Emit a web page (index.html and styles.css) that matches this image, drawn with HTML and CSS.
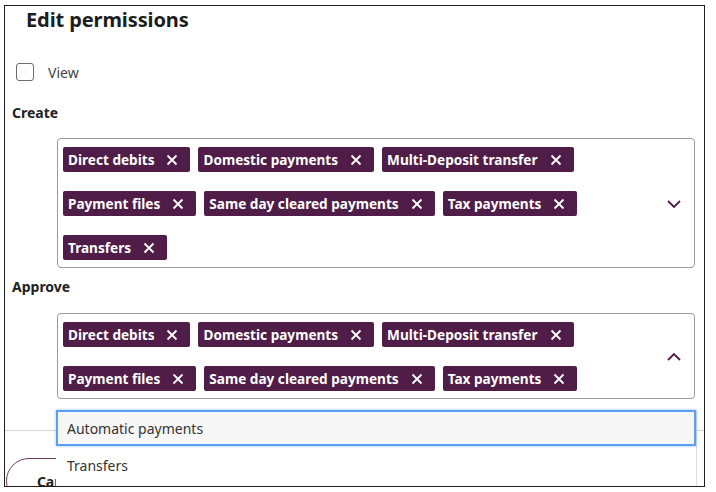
FILE: index.html
```html
<!DOCTYPE html>
<html lang="en">
<head>
<meta charset="utf-8">
<title>Edit permissions</title>
<link rel="stylesheet" href="styles.css">
</head>
<body>
<div class="modal">
  <h1 class="title">Edit permissions</h1>
  <label class="check"><span class="check-box"></span><span class="check-text">View</span></label>

  <div class="field-label">Create</div>
  <div class="select">
    <div class="chips">
      <span class="chip">Direct debits<svg class="chip-x" viewBox="0 0 12 12"><path d="M1.5 1.5L10.5 10.5M10.5 1.5L1.5 10.5"/></svg></span>
      <span class="chip">Domestic payments<svg class="chip-x" viewBox="0 0 12 12"><path d="M1.5 1.5L10.5 10.5M10.5 1.5L1.5 10.5"/></svg></span>
      <span class="chip">Multi-Deposit transfer<svg class="chip-x" viewBox="0 0 12 12"><path d="M1.5 1.5L10.5 10.5M10.5 1.5L1.5 10.5"/></svg></span>
      <span class="chip">Payment files<svg class="chip-x" viewBox="0 0 12 12"><path d="M1.5 1.5L10.5 10.5M10.5 1.5L1.5 10.5"/></svg></span>
      <span class="chip">Same day cleared payments<svg class="chip-x" viewBox="0 0 12 12"><path d="M1.5 1.5L10.5 10.5M10.5 1.5L1.5 10.5"/></svg></span>
      <span class="chip">Tax payments<svg class="chip-x" viewBox="0 0 12 12"><path d="M1.5 1.5L10.5 10.5M10.5 1.5L1.5 10.5"/></svg></span>
      <span class="chip">Transfers<svg class="chip-x" viewBox="0 0 12 12"><path d="M1.5 1.5L10.5 10.5M10.5 1.5L1.5 10.5"/></svg></span>
    </div>
    <svg class="chevron" viewBox="0 0 14 8"><path d="M1 1L7 7L13 1"/></svg>
  </div>

  <div class="field-label approve">Approve</div>
  <div class="select select-open">
    <div class="chips">
      <span class="chip">Direct debits<svg class="chip-x" viewBox="0 0 12 12"><path d="M1.5 1.5L10.5 10.5M10.5 1.5L1.5 10.5"/></svg></span>
      <span class="chip">Domestic payments<svg class="chip-x" viewBox="0 0 12 12"><path d="M1.5 1.5L10.5 10.5M10.5 1.5L1.5 10.5"/></svg></span>
      <span class="chip">Multi-Deposit transfer<svg class="chip-x" viewBox="0 0 12 12"><path d="M1.5 1.5L10.5 10.5M10.5 1.5L1.5 10.5"/></svg></span>
      <span class="chip">Payment files<svg class="chip-x" viewBox="0 0 12 12"><path d="M1.5 1.5L10.5 10.5M10.5 1.5L1.5 10.5"/></svg></span>
      <span class="chip">Same day cleared payments<svg class="chip-x" viewBox="0 0 12 12"><path d="M1.5 1.5L10.5 10.5M10.5 1.5L1.5 10.5"/></svg></span>
      <span class="chip">Tax payments<svg class="chip-x" viewBox="0 0 12 12"><path d="M1.5 1.5L10.5 10.5M10.5 1.5L1.5 10.5"/></svg></span>
    </div>
    <svg class="chevron" viewBox="0 0 14 8"><path d="M1 7L7 1L13 7"/></svg>
    <ul class="menu">
      <li class="menu-item active">Automatic payments</li>
      <li class="menu-item">Transfers</li>
    </ul>
  </div>

  <div class="footer">
    <button class="btn-cancel">Cancel</button>
  </div>
</div>
</body>
</html>
```

FILE: styles.css
```css
html, body {
  margin: 0;
  padding: 0;
  background: #ffffff;
}

body {
  font-family: "Noto Sans", "Open Sans", sans-serif;
  color: #222222;
}

.modal {
  margin: 5px 0 0 4px;
  width: 692px;
  height: 480px;
  border: 1px solid #1e1e1e;
  overflow: hidden;
  padding: 0 0 0 7px;
  box-sizing: content-box;
  display: flex;
  flex-direction: column;
  align-items: flex-start;
}

.title {
  margin: 2px 0 0 14px;
  font-size: 20px;
  line-height: 24px;
  font-weight: 700;
  color: #1d1d1d;
  letter-spacing: -0.1px;
}

.check {
  margin-top: 31px;
  margin-left: 4px;
  display: flex;
  align-items: center;
  height: 18px;
}

.check-box {
  width: 16px;
  height: 16px;
  border: 1px solid #6b6b6b;
  border-radius: 3px;
  box-sizing: content-box;
}

.check-text {
  margin-left: 14px;
  font-size: 14px;
  color: #444444;
}

.field-label {
  margin-top: 22px;
  font-size: 14px;
  line-height: 20px;
  font-weight: 700;
  color: #222222;
}

.field-label.approve {
  margin-top: 9px;
}

.select {
  position: relative;
  margin-top: 15px;
  margin-left: 45px;
  width: 638px;
  box-sizing: border-box;
  border: 1px solid #9a9a9a;
  border-radius: 4px;
  padding: 8px 0 7px 5px;
  display: flex;
  align-items: center;
}

.select-open {
  margin-top: 16px;
}

.chips {
  flex: 1;
  display: flex;
  flex-wrap: wrap;
  column-gap: 8px;
  row-gap: 19px;
}

.chip {
  display: inline-flex;
  align-items: center;
  height: 25px;
  padding: 0 12px 0 5px;
  background: #4f1d47;
  color: #ffffff;
  border-radius: 2px;
  font-size: 13.6px;
  font-weight: 700;
  white-space: nowrap;
}

.chip-x {
  width: 12px;
  height: 12px;
  margin-left: 12px;
  fill: none;
  stroke: #ffffff;
  stroke-width: 1.8;
}

.chevron {
  width: 14px;
  height: 8px;
  margin: 0 13px 0 12px;
  fill: none;
  stroke: #4f1d47;
  stroke-width: 1.8;
}

.menu {
  position: absolute;
  top: 96px;
  left: -2px;
  width: 640px;
  min-height: 110px;
  margin: 0;
  padding: 0;
  list-style: none;
  background: #ffffff;
  border-right: 1px solid #dcdcdc;
  z-index: 2;
}

.menu-item {
  height: 40px;
  line-height: 39px;
  padding-left: 11px;
  font-size: 14px;
  color: #333333;
  box-sizing: border-box;
}

.menu-item.active {
  height: 36px;
  background: #f7f7f7;
  border: 2px solid #5b9ef2;
  box-shadow: 0 0 3px rgba(91, 158, 242, 0.6);
  line-height: 33px;
  padding-left: 9px;
}

.footer {
  margin-top: 31px;
  margin-left: -7px;
  width: 699px;
  border-top: 1px solid #d4d4d4;
  padding-top: 27px;
}

.btn-cancel {
  margin-left: 1px;
  width: 108px;
  height: 46px;
  border: 1.5px solid #6b3d64;
  border-radius: 23px;
  background: #ffffff;
  font-family: "Noto Sans", "Open Sans", sans-serif;
  font-size: 14px;
  font-weight: 700;
  color: #1d1d1d;
  padding: 0;
}
```
